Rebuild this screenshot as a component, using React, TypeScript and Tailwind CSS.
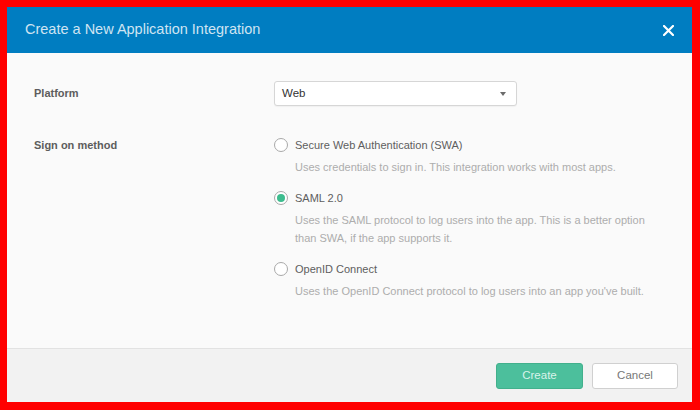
import React, { useState } from 'react';

const options = [
  {
    id: 'swa',
    label: 'Secure Web Authentication (SWA)',
    desc: ['Uses credentials to sign in. This integration works with most apps.'],
  },
  {
    id: 'saml',
    label: 'SAML 2.0',
    desc: [
      'Uses the SAML protocol to log users into the app. This is a better option',
      'than SWA, if the app supports it.',
    ],
  },
  {
    id: 'oidc',
    label: 'OpenID Connect',
    desc: ["Uses the OpenID Connect protocol to log users into an app you've built."],
  },
];

function Radio({ checked }: { checked: boolean }) {
  return (
    <span className="flex h-[14px] w-[14px] shrink-0 items-center justify-center rounded-full border border-[#a9a9a9] bg-white">
      {checked && <span className="h-[8px] w-[8px] rounded-full bg-[#3dbc8e]" />}
    </span>
  );
}

export default function App() {
  const [method, setMethod] = useState('saml');

  return (
    <div
      className="h-[410px] w-[700px] bg-[#ff0000] pb-[8px] pl-[7px] pr-[8px] pt-[7px]"
      style={{ fontFamily: '"Liberation Sans", Arial, sans-serif' }}
    >
      <div className="flex h-full flex-col bg-[#fafafa]">
        {/* Header */}
        <div className="flex h-[46px] shrink-0 items-center justify-between bg-[#007dc1] pl-[18px] pr-[18px]">
          <h1 className="text-[14.5px] font-normal text-[#cfe4f2]">Create a New Application Integration</h1>
          <button className="flex h-[12px] w-[12px] items-center justify-center">
            <svg width="11" height="11" viewBox="0 0 11 11">
              <path d="M1 1L10 10M10 1L1 10" stroke="#ffffff" strokeWidth="2.2" strokeLinecap="round" />
            </svg>
          </button>
        </div>

        {/* Body */}
        <div className="flex-1 pl-[27px] pt-[28px]">
          <div className="flex items-center">
            <div className="w-[240px] text-[11px] font-bold text-[#5d5d5d]">Platform</div>
            <div className="flex h-[25px] w-[243px] items-center justify-between rounded-[3px] border border-[#d6d6d6] bg-white pl-[7px] pr-[10px] shadow-[0_1px_1px_rgba(0,0,0,0.04)]">
              <span className="text-[11.5px] text-[#333333]">Web</span>
              <svg width="6" height="4" viewBox="0 0 6 4">
                <path d="M0 0H6L3 4Z" fill="#6b6b6b" />
              </svg>
            </div>
          </div>

          <div className="mt-[28px] flex">
            <div className="w-[240px] pt-[3px] text-[11px] font-bold text-[#5d5d5d]">Sign on method</div>
            <div className="flex flex-col gap-[11px]">
              {options.map((o) => (
                <div key={o.id} className="cursor-pointer" onClick={() => setMethod(o.id)}>
                  <div className="flex h-[22px] items-center gap-[7px]">
                    <Radio checked={method === o.id} />
                    <span className="text-[11px] text-[#5e5e5e]">{o.label}</span>
                  </div>
                  <div className="mt-[2px] pl-[21px] text-[11px] leading-[18px] text-[#adadad]">
                    {o.desc.map((d) => (
                      <div key={d}>{d}</div>
                    ))}
                  </div>
                </div>
              ))}
            </div>
          </div>
        </div>

        {/* Footer */}
        <div className="flex h-[54px] shrink-0 items-center justify-end gap-[9px] border-t border-[#e2e2e2] bg-[#f2f2f2] pr-[14px]">
          <button className="h-[26px] w-[87px] rounded-[3px] border border-[#42b08c] bg-[#4cbf9c] text-[11.5px] text-[#d9f3ea]">
            Create
          </button>
          <button className="h-[26px] w-[86px] rounded-[3px] border border-[#d0d0d0] bg-white text-[11.5px] text-[#777777]">
            Cancel
          </button>
        </div>
      </div>
    </div>
  );
}
